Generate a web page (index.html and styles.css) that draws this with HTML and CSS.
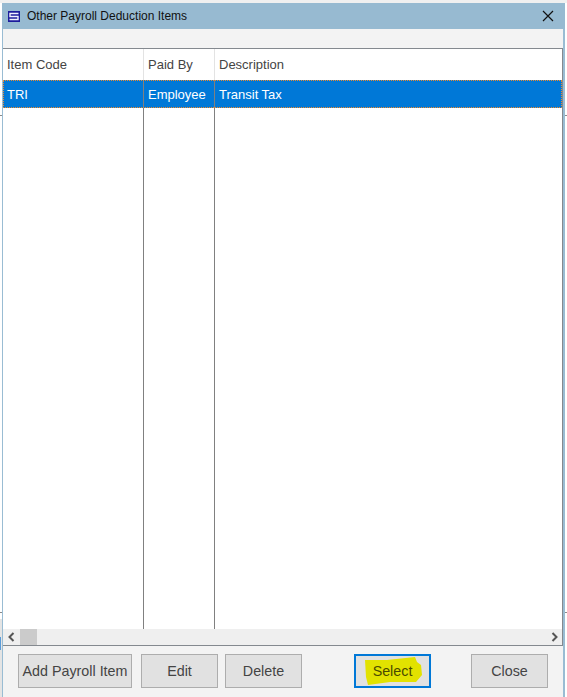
FILE: index.html
```html
<!DOCTYPE html>
<html>
    <head>
        <title>Other Payroll Deduction Items</title>
        <link rel="stylesheet" href="styles.css">
    </head>
    <body>
        <!-- bits of the app behind the dialog -->
        <div class="behind tick-left-top"></div>
        <div class="behind tick-left-bottom"></div>
        <div class="behind tick-right-top"></div>
        <div class="behind tick-right-bottom"></div>
        <div class="behind grey-left"></div>
        <div class="behind blue-left"></div>

        <div class="window">
            <div class="titlebar">
                <svg class="app-icon" width="12" height="11" viewBox="0 0 12 11">
                    <rect x="0" y="0" width="12" height="11" fill="#1c1c9c"/>
                    <path d="M10.5 2.5 H2 V5.5 H10 V8.5 H1.5" stroke="#f2f2ff" stroke-width="1.4" fill="none"/>
                </svg>
                <span class="title">Other Payroll Deduction Items</span>
                <svg class="close-x" width="12" height="12" viewBox="0 0 12 12">
                    <path d="M1 1 L11 11 M11 1 L1 11" stroke="#111" stroke-width="1.2" fill="none"/>
                </svg>
            </div>
            <div class="toolstrip"></div>
            <div class="list">
                <div class="row row-head">
                    <div class="cell">Item Code</div>
                    <div class="cell">Paid By</div>
                    <div class="cell">Description</div>
                </div>
                <div class="row row-selected">
                    <div class="cell">TRI</div>
                    <div class="cell">Employee</div>
                    <div class="cell">Transit Tax</div>
                </div>
                <div class="row row-empty">
                    <div class="cell"></div>
                    <div class="cell"></div>
                    <div class="cell"></div>
                </div>
                <div class="scrollbar">
                    <svg class="arrow" width="8" height="10" viewBox="0 0 8 10">
                        <path d="M6.5 1 L2.5 5 L6.5 9" stroke="#555" stroke-width="2" fill="none"/>
                    </svg>
                    <div class="thumb"></div>
                    <svg class="arrow arrow-right" width="8" height="10" viewBox="0 0 8 10">
                        <path d="M1.5 1 L5.5 5 L1.5 9" stroke="#555" stroke-width="2" fill="none"/>
                    </svg>
                </div>
            </div>
            <div class="buttons">
                <button class="btn btn-add">Add Payroll Item</button>
                <button class="btn btn-edit">Edit</button>
                <button class="btn btn-delete">Delete</button>
                <button class="btn btn-select">
                    <svg class="marker" width="59" height="32" viewBox="0 0 59 32">
                        <path d="M1 5 L23 5 L51 2 L53 7 L57 10 L58 20 L52 27 L26 27 L4 30 L2 22 Z" fill="#e2e200"/>
                    </svg>
                    <span class="btn-label">Select</span>
                </button>
                <button class="btn btn-close">Close</button>
            </div>
        </div>
    </body>
</html>
```

FILE: styles.css
```css
html {
    height:100%;
}

body {
    margin:0;
    padding:3px 2px 0 2px;
    height:100%;
    box-sizing:border-box;
    background:#fff;
    font-family:"Liberation Sans", Arial, sans-serif;
    overflow:hidden;
    box-shadow:inset 0 3px 0 #f0f0f0;
}

.behind {
    position:absolute;
    background:#8a8a8a;
}

.tick-left-top { left:0; top:115px; width:2px; height:1px; }
.tick-left-bottom { left:0; top:612px; width:2px; height:1px; }
.tick-right-top { left:565px; top:115px; width:2px; height:1px; }
.tick-right-bottom { left:565px; top:612px; width:2px; height:1px; }
.grey-left { left:0; top:619px; width:2px; height:78px; background:#e4e4e4; }
.blue-left { left:0; top:637px; width:1px; height:13px; background:#5a9bd8; }

.window {
    height:100%;
    box-sizing:border-box;
    display:flex;
    flex-direction:column;
    border-left:1px solid #99bcd3;
    border-right:2px solid #99bcd3;
    background:#f3f3f3;
}

.titlebar {
    height:26px;
    flex:none;
    margin-left:-1px;
    margin-right:-2px;
    display:flex;
    align-items:center;
    background:#97bad1;
    padding:0 11px 0 6px;
}

.app-icon {
    margin-right:7px;
}

.title {
    flex:1;
    font-size:12px;
    color:#111;
}

.toolstrip {
    height:19px;
    flex:none;
}

.list {
    height:598px;
    flex:none;
    display:flex;
    flex-direction:column;
    background:#fff;
    border-top:1px solid #84898f;
    border-right:1px solid #84898f;
    border-bottom:1px solid #84898f;
    box-sizing:border-box;
}

.row {
    display:grid;
    grid-template-columns:141px 71px 1fr;
    font-size:13px;
    color:#444;
}

.cell {
    padding-left:4px;
    box-sizing:border-box;
    border-right:1px solid #808080;
    display:flex;
    align-items:center;
}

.cell:last-child {
    border-right:0;
}

.row-head {
    height:31px;
    flex:none;
}

.row-head .cell {
    border-right-color:#e3e3e3;
}

.row-selected {
    height:28px;
    flex:none;
    background:#0078d7;
    color:#fff;
    outline:1px dotted #f08a2c;
    outline-offset:-1px;
}

.row-empty {
    flex:1;
}

.scrollbar {
    height:16px;
    flex:none;
    display:flex;
    align-items:center;
    background:#efefef;
}

.arrow {
    margin:0 5px 0 4px;
}

.thumb {
    width:17px;
    height:100%;
    background:#cbcbcb;
}

.arrow-right {
    margin-left:auto;
    margin-right:3px;
}

.buttons {
    flex:1;
    display:flex;
    align-items:flex-start;
    padding:8px 0 0 15px;
}

.btn {
    position:relative;
    height:34px;
    width:77px;
    padding:0;
    box-sizing:border-box;
    background:#e1e1e1;
    border:1px solid #adadad;
    font-family:inherit;
    font-size:14.3px;
    color:#444;
}

.btn-add {
    width:114px;
    margin-right:9px;
}

.btn-edit {
    margin-right:7px;
}

.btn-delete {
    margin-right:52px;
}

.btn-select {
    margin-right:40px;
    border:2px solid #0078d7;
    color:#4a4a00;
}

.btn-label {
    position:relative;
}

.marker {
    position:absolute;
    left:8px;
    top:-1px;
}
```
